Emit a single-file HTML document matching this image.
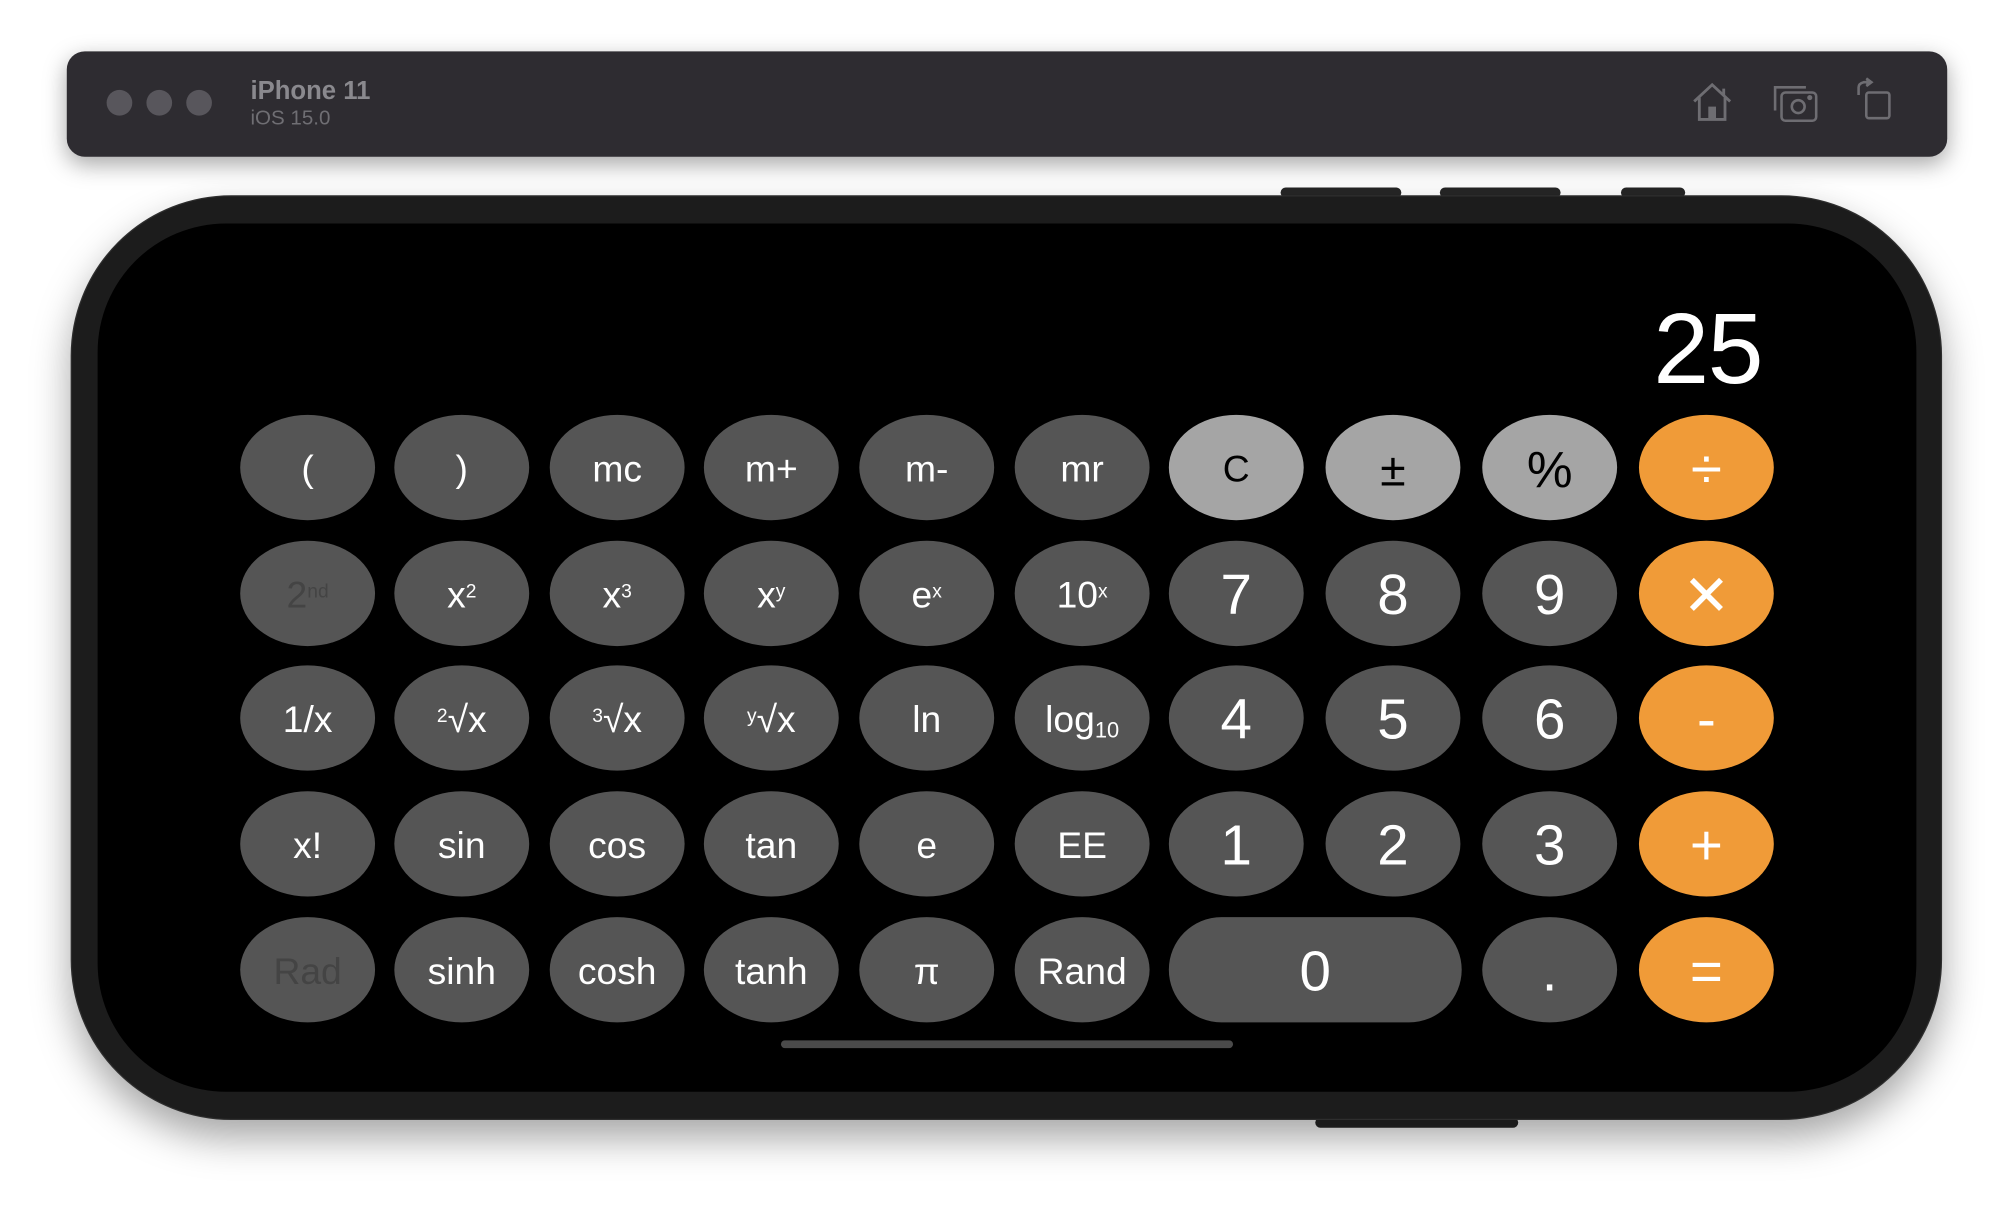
<!DOCTYPE html>
<html><head><meta charset="utf-8"><style>
html,body{margin:0;padding:0;background:#fff;width:2014px;height:1224px;overflow:hidden}
#s{position:absolute;left:0;top:0;width:1568px;height:953px;transform:scale(1.28444);transform-origin:0 0;font-family:"Liberation Sans",sans-serif}
.bar{position:absolute;left:52px;top:40px;width:1464px;height:82px;background:#2e2c31;border-radius:14px;box-shadow:0 6px 18px rgba(0,0,0,.35)}
.dot{position:absolute;top:30px;width:20px;height:20px;border-radius:50%;background:#58565c}
.t1{position:absolute;left:143px;top:20px;font-size:20px;font-weight:bold;color:#8a898e}
.t2{position:absolute;left:143px;top:44px;font-size:16px;color:#6f6e73}
.phone{position:absolute;left:55px;top:152px;width:1457px;height:720px;border-radius:125px;background:#1c1c1c;box-shadow:0 14px 30px rgba(0,0,0,.35);border:1px solid #2e2e2e;box-sizing:border-box}
.scr{position:absolute;left:76px;top:174px;width:1416px;height:676px;border-radius:100px;background:#000}
.sb{position:absolute;background:#262626;border-radius:4px}
.b{position:absolute;width:105px;height:82px;border-radius:50%/50%;background:#555;color:#fff;display:flex;align-items:center;justify-content:center;font-size:29px;padding-top:4px;box-sizing:border-box}
.b sup{font-size:15px;position:relative;top:-4px}
.dg{font-size:44px}
.lg{background:#a5a5a5;color:#000}
.or{background:#f09b38;font-size:44px}
.dis{color:#444}
.disp{position:absolute;right:196px;top:226px;font-size:78px;color:#fff;font-weight:300;letter-spacing:-1px}
.home{position:absolute;left:608px;top:810px;width:352px;height:6px;border-radius:3px;background:#4a4a4a}
</style></head><body><div id="s">
<div class="bar">
<div class="dot" style="left:31px"></div><div class="dot" style="left:62px"></div><div class="dot" style="left:93px"></div>
<div class="t1">iPhone 11</div><div class="t2">iOS 15.0</div>
<svg style="position:absolute;left:1264px;top:22px" width="36" height="36" viewBox="0 0 36 36" fill="none" stroke="#6e6d72" stroke-width="2.2"><path d="M3 17 L17 4 L31 17"/><path d="M26 7 V12"/><path d="M7 14 V31 H27 V14"/><rect x="14" y="21" width="6" height="10" fill="#6e6d72" stroke="none"/></svg>
<svg style="position:absolute;left:1327px;top:24px" width="38" height="32" viewBox="0 0 38 32" fill="none" stroke="#6e6d72" stroke-width="2"><path d="M3 22 V4 H27"/><rect x="8" y="8" width="27" height="22" rx="3"/><circle cx="21" cy="19" r="5"/><circle cx="30" cy="12" r="1" fill="#6e6d72"/></svg>
<svg style="position:absolute;left:1391px;top:20px" width="32" height="36" viewBox="0 0 32 36" fill="none" stroke="#6e6d72" stroke-width="2"><path d="M4 14 V8 Q4 5 8 4 H11"/><path d="M10 1 L14 4 L10 7" fill="#6e6d72"/><rect x="10" y="12" width="18" height="20" rx="2"/></svg>
</div>
<div class="sb" style="left:997px;top:146px;width:94px;height:8px"></div>
<div class="sb" style="left:1121px;top:146px;width:94px;height:8px"></div>
<div class="sb" style="left:1262px;top:146px;width:50px;height:8px"></div>
<div class="sb" style="left:1024px;top:870px;width:158px;height:8px"></div>
<div class="phone"></div>
<div class="scr"></div>
<div class="disp">25</div>
<div class="home"></div>

<div class="b" style="left:187px;top:323px">(</div>
<div class="b" style="left:307px;top:323px">)</div>
<div class="b" style="left:428px;top:323px">mc</div>
<div class="b" style="left:548px;top:323px">m+</div>
<div class="b" style="left:669px;top:323px">m-</div>
<div class="b" style="left:790px;top:323px">mr</div>
<div class="b lg" style="left:910px;top:323px">C</div>
<div class="b lg" style="left:1032px;top:323px;font-size:36px">±</div>
<div class="b lg" style="left:1154px;top:323px;font-size:40px">%</div>
<div class="b or" style="left:1276px;top:323px">÷</div>

<div class="b dis" style="left:187px;top:421px">2<sup>nd</sup></div>
<div class="b" style="left:307px;top:421px">x<sup>2</sup></div>
<div class="b" style="left:428px;top:421px">x<sup>3</sup></div>
<div class="b" style="left:548px;top:421px">x<sup>y</sup></div>
<div class="b" style="left:669px;top:421px">e<sup>x</sup></div>
<div class="b" style="left:790px;top:421px">10<sup>x</sup></div>
<div class="b dg" style="left:910px;top:421px">7</div>
<div class="b dg" style="left:1032px;top:421px">8</div>
<div class="b dg" style="left:1154px;top:421px">9</div>
<div class="b or" style="left:1276px;top:421px">✕</div>

<div class="b" style="left:187px;top:518px">1/x</div>
<div class="b" style="left:307px;top:518px"><sup>2</sup>√x</div>
<div class="b" style="left:428px;top:518px"><sup>3</sup>√x</div>
<div class="b" style="left:548px;top:518px"><sup>y</sup>√x</div>
<div class="b" style="left:669px;top:518px">ln</div>
<div class="b" style="left:790px;top:518px">log<span style="font-size:17px;position:relative;top:8px">10</span></div>
<div class="b dg" style="left:910px;top:518px">4</div>
<div class="b dg" style="left:1032px;top:518px">5</div>
<div class="b dg" style="left:1154px;top:518px">6</div>
<div class="b or" style="left:1276px;top:518px">-</div>

<div class="b" style="left:187px;top:616px">x!</div>
<div class="b" style="left:307px;top:616px">sin</div>
<div class="b" style="left:428px;top:616px">cos</div>
<div class="b" style="left:548px;top:616px">tan</div>
<div class="b" style="left:669px;top:616px">e</div>
<div class="b" style="left:790px;top:616px">EE</div>
<div class="b dg" style="left:910px;top:616px">1</div>
<div class="b dg" style="left:1032px;top:616px">2</div>
<div class="b dg" style="left:1154px;top:616px">3</div>
<div class="b or" style="left:1276px;top:616px">+</div>

<div class="b dis" style="left:187px;top:714px">Rad</div>
<div class="b" style="left:307px;top:714px">sinh</div>
<div class="b" style="left:428px;top:714px">cosh</div>
<div class="b" style="left:548px;top:714px">tanh</div>
<div class="b" style="left:669px;top:714px">π</div>
<div class="b" style="left:790px;top:714px">Rand</div>
<div class="b dg" style="left:910px;top:714px;width:228px;border-radius:41px">0</div>
<div class="b dg" style="left:1154px;top:714px">.</div>
<div class="b or" style="left:1276px;top:714px">=</div>
</div></body></html>
